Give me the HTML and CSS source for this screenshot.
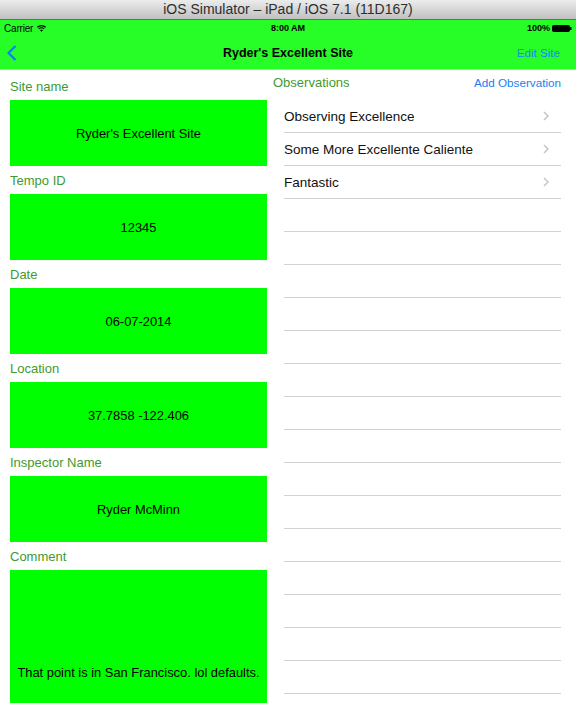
FILE: index.html
```html
<!DOCTYPE html>
<html>
<head>
<meta charset="utf-8">
<link rel="stylesheet" href="styles.css">
</head>
<body>
<div class="app">
  <div class="titlebar">iOS Simulator – iPad / iOS 7.1 (11D167)</div>
  <div class="header">
    <div class="status">
      <div class="status-left">
        <span>Carrier</span>
        <svg class="wifi" width="9" height="7" viewBox="0 0 9 7">
          <path d="M0.3 2.4 A6 6 0 0 1 8.7 2.4" fill="none" stroke="#000" stroke-width="1.2"/>
          <path d="M1.8 3.9 A3.8 3.8 0 0 1 7.2 3.9" fill="none" stroke="#000" stroke-width="1.2"/>
          <path d="M3.1 5.3 L4.5 6.8 L5.9 5.3 A2 2 0 0 0 3.1 5.3 Z" fill="#000"/>
        </svg>
      </div>
      <div class="status-center">8:00 AM</div>
      <div class="status-right">
        <span>100%</span>
        <svg class="battery" width="20" height="7" viewBox="0 0 20 7">
          <rect x="0.5" y="0.5" width="17" height="6" rx="1" fill="#000" stroke="#000"/>
          <rect x="18" y="2" width="1.5" height="3" fill="#000"/>
        </svg>
      </div>
    </div>
    <div class="nav">
      <div class="nav-left">
        <svg class="back" width="10" height="16" viewBox="0 0 10 16">
          <polyline points="8.5,1 1.5,8 8.5,15" fill="none" stroke="#0a7cff" stroke-width="2.2"/>
        </svg>
      </div>
      <div class="nav-title">Ryder's Excellent Site</div>
      <div class="nav-right">Edit Site</div>
    </div>
  </div>
  <div class="main">
    <div class="left">
      <div class="field"><div class="label">Site name</div><div class="box">Ryder's Excellent Site</div></div>
      <div class="field"><div class="label">Tempo ID</div><div class="box">12345</div></div>
      <div class="field"><div class="label">Date</div><div class="box">06-07-2014</div></div>
      <div class="field"><div class="label">Location</div><div class="box">37.7858 -122.406</div></div>
      <div class="field"><div class="label">Inspector Name</div><div class="box">Ryder McMinn</div></div>
      <div class="field"><div class="label">Comment</div><div class="box box-tall">That point is in San Francisco. lol defaults.</div></div>
    </div>
    <div class="right">
      <div class="obs-head">
        <span class="obs-title">Observations</span>
        <span class="obs-add">Add Observation</span>
      </div>
      <div class="rows">
        <div class="row"><span>Observing Excellence</span><svg class="chev" width="6" height="10" viewBox="0 0 6 10"><polyline points="1,1 5,5 1,9" fill="none" stroke="#c4c4c9" stroke-width="1.5"/></svg></div>
        <div class="row"><span>Some More Excellente Caliente</span><svg class="chev" width="6" height="10" viewBox="0 0 6 10"><polyline points="1,1 5,5 1,9" fill="none" stroke="#c4c4c9" stroke-width="1.5"/></svg></div>
        <div class="row"><span>Fantastic</span><svg class="chev" width="6" height="10" viewBox="0 0 6 10"><polyline points="1,1 5,5 1,9" fill="none" stroke="#c4c4c9" stroke-width="1.5"/></svg></div>
        <div class="row"></div>
        <div class="row"></div>
        <div class="row"></div>
        <div class="row"></div>
        <div class="row"></div>
        <div class="row"></div>
        <div class="row"></div>
        <div class="row"></div>
        <div class="row"></div>
        <div class="row"></div>
        <div class="row"></div>
        <div class="row"></div>
        <div class="row"></div>
        <div class="row"></div>
        <div class="row"></div>
        <div class="row"></div>
      </div>
    </div>
  </div>
</div>
</body>
</html>
```

FILE: styles.css
```css
html, body {
  margin: 0;
  padding: 0;
  overflow: hidden;
  background: #fff;
}
body {
  font-family: "Liberation Sans", Arial, sans-serif;
  color: #000;
}
.app {
  width: 576px;
  height: 703px;
  overflow: hidden;
  display: flex;
  flex-direction: column;
}
.titlebar {
  height: 20px;
  flex: none;
  box-sizing: border-box;
  border-bottom: 1px solid #6b6b6b;
  background: linear-gradient(#ececec, #d6d6d6 50%, #c0c0c0);
  color: #2e2e2e;
  font-size: 14px;
  line-height: 19px;
  text-align: center;
}
.header {
  flex: none;
  background: #27fd27;
  border-bottom: 1px solid #c9c9c9;
}
.status {
  height: 16px;
  display: flex;
  align-items: center;
  justify-content: space-between;
  padding: 0 4px;
  font-size: 9px;
  position: relative;
}
.status-left, .status-right {
  display: flex;
  align-items: center;
  gap: 3px;
}
.status-left span { font-size: 10px; letter-spacing: -0.2px; }
.status-center {
  position: absolute;
  left: 0;
  right: 0;
  text-align: center;
  font-weight: bold;
}
.status-right { gap: 2px; font-weight: bold; }
.wifi { margin-left: 1px; }
.nav {
  height: 33px;
  display: flex;
  align-items: center;
  justify-content: space-between;
  padding: 0 16px 0 7px;
  position: relative;
}
.nav-left { display: flex; align-items: center; }
.back { display: block; }
.nav-title {
  position: absolute;
  left: 0;
  right: 0;
  text-align: center;
  font-weight: bold;
  font-size: 12.5px;
  pointer-events: none;
}
.nav-right {
  color: #1a86ff;
  font-size: 11.6px;
}
.main {
  flex: 1;
  display: flex;
  min-height: 0;
}
.left {
  width: 257px;
  margin-left: 10px;
  padding-top: 2px;
  flex: none;
}
.label {
  height: 28px;
  line-height: 29px;
  font-size: 13px;
  color: #3e9a31;
  overflow: hidden;
}
.box {
  height: 66px;
  background: #00ff00;
  display: flex;
  align-items: center;
  justify-content: center;
  font-size: 12.9px;
}
.box-tall { height: 204px; }
.right {
  flex: 1;
  margin-left: 6px;
  padding-right: 15px;
}
.obs-head {
  height: 24px;
  margin-bottom: 6px;
  display: flex;
  align-items: center;
  justify-content: space-between;
}
.obs-title {
  font-size: 13px;
  color: #3e9a31;
}
.obs-add {
  font-size: 11.7px;
  color: #1a7ff2;
}
.rows {
  margin-left: 11px;
}
.row {
  height: 32px;
  border-bottom: 1px solid #d2d2d6;
  display: flex;
  align-items: center;
  justify-content: space-between;
  font-size: 13.5px;
  color: #111;
  padding-right: 12px;
}
.row span { padding-top: 1px; }
.chev { display: block; }
```
